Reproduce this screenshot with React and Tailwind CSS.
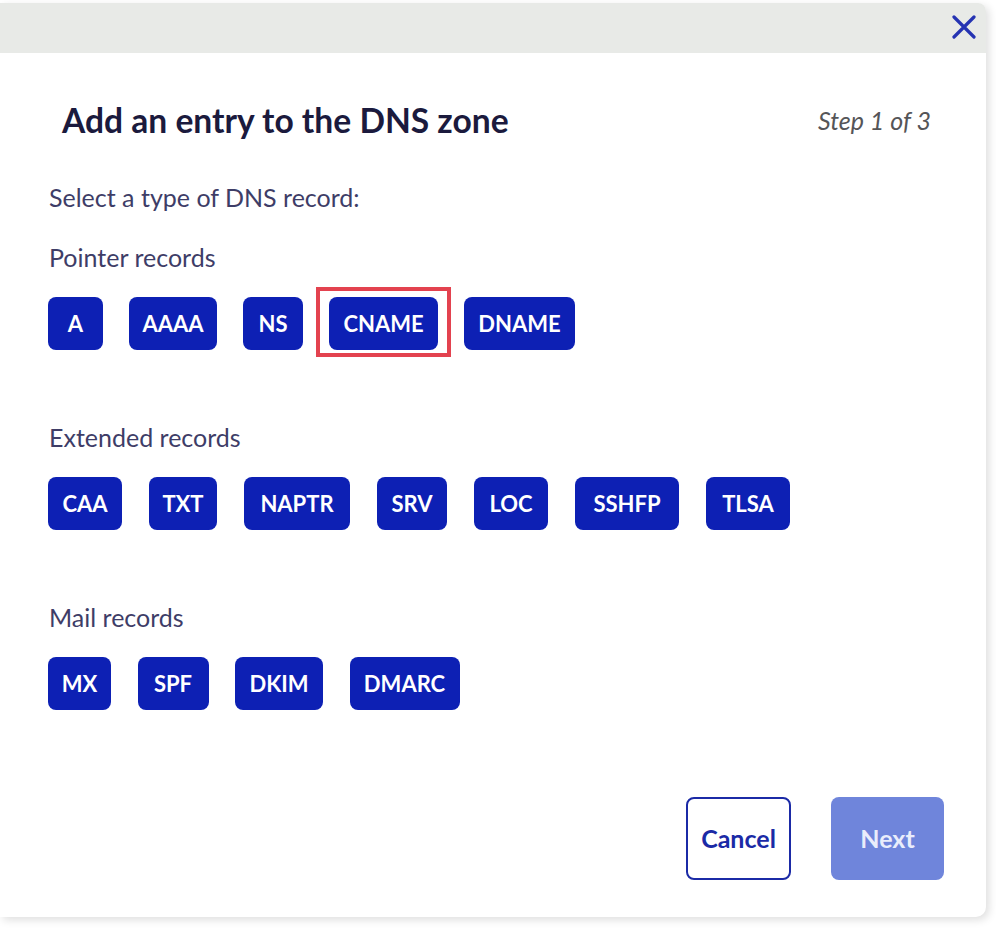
import React from "react";

const rows = [
  {
    label: "Pointer records",
    gap: "gap-[26px]",
    items: [
      { t: "A", w: "w-[55px]" },
      { t: "AAAA", w: "w-[88px]" },
      { t: "NS", w: "w-[60px]" },
      { t: "CNAME", w: "w-[109px]", hl: true },
      { t: "DNAME", w: "w-[111px]" },
    ],
  },
  {
    label: "Extended records",
    gap: "gap-[27px]",
    items: [
      { t: "CAA", w: "w-[74px]" },
      { t: "TXT", w: "w-[68px]" },
      { t: "NAPTR", w: "w-[106px]" },
      { t: "SRV", w: "w-[70px]" },
      { t: "LOC", w: "w-[74px]" },
      { t: "SSHFP", w: "w-[104px]" },
      { t: "TLSA", w: "w-[84px]" },
    ],
  },
  {
    label: "Mail records",
    gap: "gap-[26.5px]",
    items: [
      { t: "MX", w: "w-[63px]" },
      { t: "SPF", w: "w-[71px]" },
      { t: "DKIM", w: "w-[88px]" },
      { t: "DMARC", w: "w-[110px]" },
    ],
  },
];

function RecordButton({ t, w, hl }) {
  return (
    <div className="relative">
      {hl && (
        <span className="absolute -left-[13px] -right-[13px] -top-[10px] -bottom-[7px] border-[4px] border-[#e3424f] pointer-events-none" />
      )}
      <button
        className={`${w} h-[53px] rounded-[8px] bg-[#0d20b4] text-white text-[22px] font-bold flex items-center justify-center`}
      >
        {t}
      </button>
    </div>
  );
}

export default function App() {
  return (
    <div
      className="w-[996px] h-[928px] bg-white overflow-hidden"
      style={{ fontFamily: "Lato, 'Open Sans', sans-serif" }}
    >
      <div className="mt-[3px] w-[986px] h-[914px] bg-white rounded-tr-[8px] rounded-br-[10px] shadow-[3px_3px_8px_rgba(0,0,0,0.13)] overflow-hidden flex flex-col">
        <div className="h-[50px] bg-[#e8eae7] flex items-center justify-end pr-[10px]">
          <svg width="24" height="24" viewBox="0 0 24 24" className="mt-[-2px]">
            <path d="M2 2 L22 22 M22 2 L2 22" stroke="#2533b2" strokeWidth="3.2" strokeLinecap="round" />
          </svg>
        </div>
        <div className="flex-1 flex flex-col pl-[48px] pr-[42px]">
          <div className="mt-[47px] flex items-center justify-between pr-[13px]">
            <h1 className="pl-[14px] text-[33.6px] leading-[40px] font-bold text-[#1b1a3d]">
              Add an entry to the DNS zone
            </h1>
            <span className="text-[25px] leading-[40px] italic text-[#555558]">Step 1 of 3</span>
          </div>
          <p className="mt-[42px] pl-[1px] text-[25px] leading-[30px] text-[#3e3d67]">
            Select a type of DNS record:
          </p>
          {rows.map((r, i) => (
            <div key={r.label} className={i === 0 ? "mt-[30px]" : "mt-[72px]"}>
              <p className="pl-[1px] text-[25px] leading-[30px] text-[#3e3d67]">{r.label}</p>
              <div className={`mt-[25px] flex ${r.gap}`}>
                {r.items.map((it) => (
                  <RecordButton key={it.t} {...it} />
                ))}
              </div>
            </div>
          ))}
          <div className="mt-[87px] flex justify-end gap-[40px]">
            <button className="w-[105px] h-[83px] rounded-[8px] border-[2px] border-[#1b2aa6] bg-white text-[#1b2aa6] text-[25px] font-bold">
              Cancel
            </button>
            <button className="w-[113px] h-[83px] rounded-[8px] bg-[#6f85db] text-[#e9edfb] text-[25px] font-bold">
              Next
            </button>
          </div>
        </div>
      </div>
    </div>
  );
}
